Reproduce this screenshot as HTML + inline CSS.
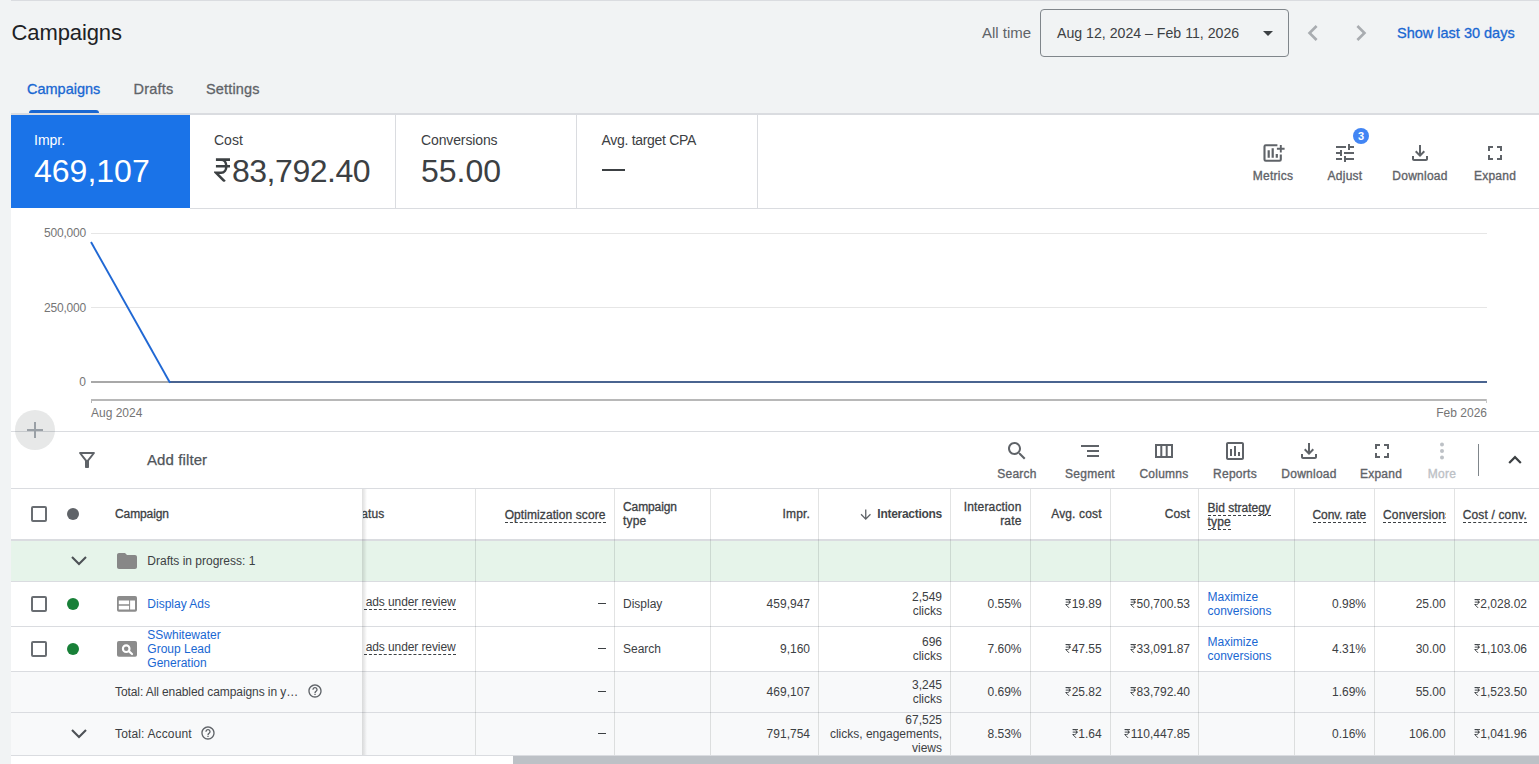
<!DOCTYPE html>
<html><head><meta charset="utf-8">
<style>
*{box-sizing:border-box;margin:0;padding:0}
html,body{width:1539px;height:764px;overflow:hidden;background:#f1f3f4;font-family:"Liberation Sans",sans-serif;color:#3c4043}
.a{position:absolute;white-space:nowrap;line-height:1}
.t{position:absolute;white-space:nowrap;line-height:14px;font-size:12px;color:#3c4043}
.r{text-align:right}
svg{display:block}
.rs{display:inline-block;width:.56em;height:.74em;vertical-align:baseline}
.lbl{position:absolute;font-size:12px;line-height:1;color:#5f6368;white-space:nowrap;text-align:center;-webkit-text-stroke:.35px #5f6368;letter-spacing:.25px}
.vl{position:absolute;width:1px;background:#dadce0}
.hl{position:absolute;height:1px;background:#dadce0}
.du{border-bottom:1px dashed #3c4043}
.blue{color:#1967d2}
</style></head><body>
<svg width="0" height="0" style="position:absolute"><defs>
<symbol id="rs" viewBox="0 0 56 74"><path d="M6 5H50M6 26H50M6 5H22C44 5 44 46 22 46H6L34 74" fill="none" stroke="currentColor" stroke-width="8" stroke-linejoin="miter"/></symbol>
</defs></svg>

<!-- top -->
<div class="hl" style="left:11px;top:0;width:1528px;height:1px;background:#dadce0"></div>
<div class="a" id="title" style="left:11.5px;top:22px;font-size:22px;letter-spacing:-.1px;color:#202124">Campaigns</div>

<!-- main white -->
<div class="a" style="left:11px;top:113px;width:1528px;height:2px;background:#dadce0"></div>
<div class="a" style="left:11px;top:115px;width:1528px;height:649px;background:#fff"></div>

<!-- tabs -->
<div class="a" id="tab1" style="left:27px;top:82px;font-size:14.5px;color:#1967d2;-webkit-text-stroke:.3px #1967d2">Campaigns</div>
<div class="a" id="tab2" style="left:133.5px;top:82px;font-size:14.5px;letter-spacing:.2px;color:#5f6368;-webkit-text-stroke:.3px #5f6368">Drafts</div>
<div class="a" id="tab3" style="left:206px;top:82px;font-size:14.5px;letter-spacing:.15px;color:#5f6368;-webkit-text-stroke:.3px #5f6368">Settings</div>
<div class="a" style="left:29px;top:110px;width:70px;height:3px;background:#1967d2;border-radius:3px 3px 0 0"></div>

<!-- date range -->
<div class="a" id="alltime" style="left:982px;top:25px;font-size:15px;color:#5f6368">All time</div>
<div class="a" style="left:1040px;top:9px;width:249px;height:48px;border:1px solid #80868b;border-radius:4px"></div>
<div class="a" id="daterange" style="left:1057px;top:26px;font-size:14.15px;color:#3c4043">Aug 12, 2024 – Feb 11, 2026</div>
<svg class="a" style="left:1263px;top:31px" width="10" height="5"><path d="M0 0H10L5 5z" fill="#3c4043"/></svg>
<svg class="a" style="left:1301px;top:21px" width="24" height="24" viewBox="0 0 24 24"><path d="M15.41 7.41L14 6l-6 6 6 6 1.41-1.41L10.83 12z" fill="#a9acb0" transform="translate(12 12) scale(1.33) translate(-12 -12)"/></svg>
<svg class="a" style="left:1349px;top:21px" width="24" height="24" viewBox="0 0 24 24"><path d="M10 6L8.59 7.41 13.17 12l-4.58 4.59L10 18l6-6z" fill="#a9acb0" transform="translate(12 12) scale(1.33) translate(-12 -12)"/></svg>
<div class="a" id="show30" style="left:1397px;top:26px;font-size:14.5px;color:#1967d2;-webkit-text-stroke:.3px #1967d2">Show last 30 days</div>

<!-- cards -->
<div class="a" style="left:11px;top:115px;width:179px;height:93px;background:#1a73e8"></div>
<div class="hl" style="left:190px;top:208px;width:1349px"></div>
<div class="vl" style="left:395px;top:115px;height:93px"></div>
<div class="vl" style="left:576px;top:115px;height:93px"></div>
<div class="vl" style="left:757px;top:115px;height:93px"></div>
<div class="a" id="c1l" style="left:34px;top:133px;font-size:14px;color:#fff">Impr.</div>
<div class="a" id="c1v" style="left:34px;top:155px;font-size:32px;color:#fff">469,107</div>
<div class="a" id="c2l" style="left:214px;top:133px;font-size:14px;color:#3c4043">Cost</div>
<div class="a" id="c2v" style="left:214px;top:155px;font-size:32px;letter-spacing:-.45px;color:#3c4043"><svg class="rs"><use href="#rs"/></svg>83,792.40</div>
<div class="a" id="c3l" style="left:421px;top:133px;font-size:14px;letter-spacing:-.12px;color:#3c4043">Conversions</div>
<div class="a" id="c3v" style="left:421px;top:155px;font-size:32px;color:#3c4043">55.00</div>
<div class="a" id="c4l" style="left:601.5px;top:133px;font-size:14px;letter-spacing:-.3px;color:#3c4043">Avg. target CPA</div>
<div class="a" style="left:602px;top:169px;width:23px;height:2px;background:#3c4043"></div>

<!-- card right actions -->
<svg class="a" style="left:1261px;top:141px" width="26" height="24" viewBox="0 0 26 24" fill="none" stroke="#5f6368" stroke-width="2.100"><path d="M16.400 4.300H4.700Q3.500 4.300 3.500 5.500V18.500Q3.500 19.700 4.700 19.700H18.600Q19.800 19.700 19.800 18.500V13.600"/><path d="M15.900 7.800H23.600M19.800 4.100V11.500" stroke-width="1.900"/><path d="M7.700 9.300V16.800M11.700 7.200V16.800M15.800 13.100V16.800" stroke-width="2.200"/></svg>
<div class="lbl" id="l_metrics" style="left:1243px;width:60px;top:170px">Metrics</div>
<svg class="a" style="left:1333px;top:141px" width="24" height="24" viewBox="0 0 24 24" fill="#5f6368"><path d="M3 17v2h6v-2H3zM3 5v2h10V5H3zm10 16v-2h8v-2h-8v-2h-2v6h2zM7 9v2H3v2h4v2h2V9H7zm14 4v-2H11v2h10zm-6-4h2V7h4V5h-4V3h-2v6z"/></svg>
<div class="a" style="left:1353px;top:128px;width:16px;height:16px;border-radius:8px;background:#4285f4;color:#fff;font-size:11px;font-weight:bold;text-align:center;line-height:16px">3</div>
<div class="lbl" id="l_adjust" style="left:1315px;width:60px;top:170px">Adjust</div>
<svg class="a" style="left:1408px;top:141px" width="24" height="24" viewBox="0 0 24 24" fill="#5f6368"><path d="M18 15v3H6v-3H4v3c0 1.1.9 2 2 2h12c1.1 0 2-.9 2-2v-3h-2zm-1-4l-1.41-1.41L13 12.170V4h-2v8.170L8.410 9.590 7 11l5 5 5-5z"/></svg>
<div class="lbl" id="l_dl1" style="left:1385px;width:70px;top:170px">Download</div>
<svg class="a" style="left:1483px;top:141px" width="24" height="24" viewBox="0 0 24 24" fill="#5f6368"><path d="M7 14H5v5h5v-2H7v-3zm-2-4h2V7h3V5H5v5zm12 7h-3v2h5v-5h-2v3zM14 5v2h3v3h2V5h-5z"/></svg>
<div class="lbl" id="l_exp1" style="left:1465px;width:60px;top:170px">Expand</div>

<!-- chart -->
<div class="hl" style="left:91px;top:233px;width:1396px;background:#e6e6e6"></div>
<div class="hl" style="left:91px;top:307px;width:1396px;background:#e6e6e6"></div>
<div class="hl" style="left:91px;top:381px;width:1396px;height:2px;background:#a8a8a8"></div>
<div class="hl" style="left:91px;top:399px;width:1396px;height:2px;background:#b8b8b8"></div>
<div class="vl" style="left:91px;top:399px;height:4px;background:#b8b8b8"></div>
<div class="vl" style="left:1486px;top:399px;height:4px;background:#c8c8c8"></div>
<svg class="a" style="left:0;top:209px" width="1539" height="200"><path d="M169 173H1487" fill="none" stroke="#4a6490" stroke-width="2"/><path d="M91 33L170 173.700" fill="none" stroke="#2068d4" stroke-width="1.900"/></svg>
<div class="a r" id="y1" style="left:20px;width:66px;top:227px;font-size:12px;color:#757575;letter-spacing:-.2px">500,000</div>
<div class="a r" id="y2" style="left:20px;width:66px;top:302px;font-size:12px;color:#757575;letter-spacing:-.2px">250,000</div>
<div class="a r" id="y3" style="left:20px;width:66px;top:376px;font-size:12px;color:#757575">0</div>
<div class="a" id="x1" style="left:91px;top:407px;font-size:12px;color:#757575">Aug 2024</div>
<div class="a r" id="x2" style="left:1387px;width:100px;top:407px;font-size:12px;color:#757575">Feb 2026</div>

<!-- toolbar -->
<div class="hl" style="left:11px;top:431px;width:1528px"></div>
<div class="a" style="left:15px;top:410px;width:40px;height:40px;border-radius:20px;background:rgba(60,64,67,.12)"></div>
<div class="a" style="left:27px;top:429px;width:16px;height:2px;background:#9aa0a6"></div>
<div class="a" style="left:34px;top:422px;width:2px;height:16px;background:#9aa0a6"></div>
<svg class="a" style="left:75px;top:448px" width="24" height="24" viewBox="0 0 24 24" fill="#5f6368"><path d="M7 6h10l-5.010 6.300L7 6zm-2.750-.390C6.270 8.200 10 13 10 13v6c0 .550.450 1 1 1h2c.550 0 1-.450 1-1v-6s3.720-4.800 5.740-7.390c.510-.660.040-1.610-.790-1.610H5.040c-.830 0-1.300.950-.790 1.610z"/></svg>
<div class="a" id="addfilter" style="left:147px;top:452px;font-size:15px;color:#50555a;-webkit-text-stroke:.25px #50555a;letter-spacing:.1px">Add filter</div>

<!-- toolbar right -->
<svg class="a" style="left:1005px;top:439px" width="24" height="24" viewBox="0 0 24 24" fill="#5f6368"><path d="M15.500 14h-.790l-.280-.270C15.410 12.590 16 11.110 16 9.500 16 5.910 13.090 3 9.500 3S3 5.910 3 9.500 5.910 16 9.500 16c1.610 0 3.090-.590 4.230-1.570l.270.280v.790l5 4.990L20.490 19l-4.990-5zm-6 0C7.010 14 5 11.990 5 9.500S7.010 5 9.500 5 14 7.010 14 9.500 11.990 14 9.500 14z"/></svg>
<div class="lbl" id="l_search" style="left:987px;width:60px;top:468px">Search</div>
<svg class="a" style="left:1078px;top:439px" width="24" height="24" viewBox="0 0 24 24" fill="#5f6368"><path d="M9 18h12v-2H9v2zM3 6v2h18V6H3zm6 7h12v-2H9v2z"/></svg>
<div class="lbl" id="l_segment" style="left:1055px;width:70px;top:468px">Segment</div>
<svg class="a" style="left:1152px;top:439px" width="24" height="24" viewBox="0 0 24 24" fill="none" stroke="#5f6368" stroke-width="2"><path d="M4 6H20V18H4zM9.300 6V18M14.700 6V18"/></svg>
<div class="lbl" id="l_columns" style="left:1129px;width:70px;top:468px">Columns</div>
<svg class="a" style="left:1223px;top:439px" width="24" height="24" viewBox="0 0 24 24" fill="#5f6368"><path d="M9 17H7v-7h2v7zm4 0h-2V7h2v10zm4 0h-2v-4h2v4zm2 2H5V5h14v14zm0-16H5c-1.100 0-2 .900-2 2v14c0 1.100.900 2 2 2h14c1.100 0 2-.900 2-2V5c0-1.100-.900-2-2-2z"/></svg>
<div class="lbl" id="l_reports" style="left:1200px;width:70px;top:468px">Reports</div>
<svg class="a" style="left:1297px;top:439px" width="24" height="24" viewBox="0 0 24 24" fill="#5f6368"><path d="M18 15v3H6v-3H4v3c0 1.1.9 2 2 2h12c1.1 0 2-.9 2-2v-3h-2zm-1-4l-1.41-1.41L13 12.170V4h-2v8.170L8.410 9.590 7 11l5 5 5-5z"/></svg>
<div class="lbl" id="l_dl2" style="left:1274px;width:70px;top:468px">Download</div>
<svg class="a" style="left:1370px;top:439px" width="24" height="24" viewBox="0 0 24 24" fill="#5f6368"><path d="M7 14H5v5h5v-2H7v-3zm-2-4h2V7h3V5H5v5zm12 7h-3v2h5v-5h-2v3zM14 5v2h3v3h2V5h-5z"/></svg>
<div class="lbl" id="l_exp2" style="left:1351px;width:60px;top:468px">Expand</div>
<svg class="a" style="left:1430px;top:439px" width="24" height="24" viewBox="0 0 24 24" fill="#bdc1c6"><circle cx="12" cy="5.500" r="2"/><circle cx="12" cy="12" r="2"/><circle cx="12" cy="18.500" r="2"/></svg>
<div class="lbl" id="l_more" style="left:1412px;width:60px;top:468px;color:#bdc1c6;-webkit-text-stroke-color:#bdc1c6">More</div>
<div class="vl" style="left:1478px;top:444px;height:32px;background:#80868b"></div>
<svg class="a" style="left:1503px;top:448px" width="24" height="24" viewBox="0 0 24 24" fill="#3c4043"><path d="M12 8l-6 6 1.410 1.410L12 10.830l4.590 4.580L18 14z" transform="translate(12 12) scale(1.1) translate(-12 -12)"/></svg>

<!-- table -->
<div class="hl" style="left:11px;top:488px;width:1528px"></div>
<div class="a" style="left:11px;top:539px;width:1528px;height:2px;background:#dadce0"></div>
<div class="a" style="left:11px;top:541px;width:1528px;height:40px;background:#e6f4ea"></div>
<div class="a" style="left:11px;top:672px;width:1528px;height:83px;background:#f8f9fa"></div>
<div class="hl" style="left:11px;top:581px;width:1528px"></div>
<div class="hl" style="left:11px;top:626px;width:1528px"></div>
<div class="hl" style="left:11px;top:671px;width:1528px"></div>
<div class="hl" style="left:11px;top:712px;width:1528px"></div>
<div class="hl" style="left:11px;top:755px;width:1528px"></div>
<div class="vl" style="left:475px;top:489px;height:266px;background:rgba(60,64,67,.15)"></div>
<div class="vl" style="left:614px;top:489px;height:266px;background:rgba(60,64,67,.15)"></div>
<div class="vl" style="left:710px;top:489px;height:266px;background:rgba(60,64,67,.15)"></div>
<div class="vl" style="left:818px;top:489px;height:266px;background:rgba(60,64,67,.15)"></div>
<div class="vl" style="left:950px;top:489px;height:266px;background:rgba(60,64,67,.15)"></div>
<div class="vl" style="left:1030px;top:489px;height:266px;background:rgba(60,64,67,.15)"></div>
<div class="vl" style="left:1110px;top:489px;height:266px;background:rgba(60,64,67,.15)"></div>
<div class="vl" style="left:1198px;top:489px;height:266px;background:rgba(60,64,67,.15)"></div>
<div class="vl" style="left:1294px;top:489px;height:266px;background:rgba(60,64,67,.15)"></div>
<div class="vl" style="left:1374px;top:489px;height:266px;background:rgba(60,64,67,.15)"></div>
<div class="vl" style="left:1454px;top:489px;height:266px;background:rgba(60,64,67,.15)"></div>
<div class="a" style="left:362px;top:489px;width:5px;height:266px;background:linear-gradient(90deg,rgba(0,0,0,.13),rgba(0,0,0,.08) 45%,rgba(0,0,0,0))"></div>
<div class="a" style="left:11px;top:756px;width:502px;height:8px;background:#fff"></div>
<div class="a" style="left:513px;top:756px;width:1026px;height:8px;background:#bdc1c6"></div>
<div class="a" style="left:31px;top:506px;width:16px;height:16px;border:2px solid #696d72;border-radius:2px"></div>
<div class="a" style="left:67px;top:508px;width:12px;height:12px;border-radius:6px;background:#5f6368"></div>
<div class="t " id="h_camp" style="left:115px;top:507.0px;font-weight:normal;-webkit-text-stroke:.3px #3c4043;letter-spacing:-0.1px;">Campaign</div>
<div class="a" style="left:363px;top:500px;width:40px;height:28px;overflow:hidden"><div class="t" id="h_status" style="left:-13.500px;top:7px;font-weight:normal;-webkit-text-stroke:.3px #3c4043;letter-spacing:.15px;">Status</div></div>
<div class="t r " id="h_opt" style="right:933.5px;top:507.5px;font-weight:normal;-webkit-text-stroke:.3px #3c4043;letter-spacing:0.08px;"><span class="du">Optimization score</span></div>
<div class="t " id="h_ct1" style="left:623px;top:500.0px;font-weight:normal;-webkit-text-stroke:.3px #3c4043;letter-spacing:-0.1px;">Campaign</div>
<div class="t " id="h_ct2" style="left:623px;top:514.0px;font-weight:normal;-webkit-text-stroke:.3px #3c4043;letter-spacing:.15px;">type</div>
<div class="t r " id="h_impr" style="right:729px;top:507.0px;font-weight:normal;-webkit-text-stroke:.3px #3c4043;letter-spacing:.15px;">Impr.</div>
<div class="t r " id="h_int" style="right:597px;top:507.0px;font-weight:bold;color:#43474a;letter-spacing:-.28px;">Interactions</div>
<svg class="a" style="left:858px;top:507px" width="15.500" height="15.500" viewBox="0 0 24 24" fill="#5f6368"><path d="M20 12l-1.410-1.410L13 16.170V4h-2v12.170l-5.580-5.590L4 12l8 8 8-8z"/></svg>
<div class="t r " id="h_ir1" style="right:517.5px;top:500.0px;font-weight:normal;-webkit-text-stroke:.3px #3c4043;letter-spacing:.15px;">Interaction</div>
<div class="t r " id="h_ir2" style="right:517.5px;top:514.0px;font-weight:normal;-webkit-text-stroke:.3px #3c4043;letter-spacing:.15px;">rate</div>
<div class="t r " id="h_avg" style="right:437.29999999999995px;top:507.0px;font-weight:normal;-webkit-text-stroke:.3px #3c4043;letter-spacing:.15px;">Avg. cost</div>
<div class="t r " id="h_cost" style="right:349px;top:507.0px;font-weight:normal;-webkit-text-stroke:.3px #3c4043;letter-spacing:.15px;">Cost</div>
<div class="t " id="h_bid1" style="left:1207.5px;top:501.0px;font-weight:normal;-webkit-text-stroke:.3px #3c4043;letter-spacing:0px;"><span class="du">Bid strategy</span></div>
<div class="t " id="h_bid2" style="left:1207.5px;top:515.0px;font-weight:normal;-webkit-text-stroke:.3px #3c4043;letter-spacing:.15px;"><span class="du">type</span></div>
<div class="t r " id="h_cr" style="right:173px;top:507.5px;font-weight:normal;-webkit-text-stroke:.3px #3c4043;letter-spacing:-0.1px;"><span class="du">Conv. rate</span></div>
<div class="a" style="left:1383px;top:500px;width:63px;height:28px;overflow:hidden"><div class="t" id="h_conv" style="left:0;top:7.500px;font-weight:normal;-webkit-text-stroke:.3px #3c4043;letter-spacing:.15px;"><span class="du">Conversions</span></div></div>
<div class="t r " id="h_cc" style="right:12px;top:507.5px;font-weight:normal;-webkit-text-stroke:.3px #3c4043;letter-spacing:.15px;"><span class="du">Cost / conv.</span></div>
<svg class="a" style="left:70px;top:554px" width="18" height="12" viewBox="0 0 18 12"><path d="M2 3L9 10L16 3" fill="none" stroke="#4d5156" stroke-width="2.100"/></svg>
<svg class="a" style="left:115px;top:549px" width="24" height="24" viewBox="0 0 24 24" fill="#878787"><path d="M10 4H4c-1.100 0-1.990.900-1.990 2L2 18c0 1.100.900 2 2 2h16c1.100 0 2-.900 2-2V8c0-1.100-.900-2-2-2h-8l-2-2z"/></svg>
<div class="t " id="d_txt" style="left:147.3px;top:554.0px;">Drafts in progress: 1</div>
<div class="a" style="left:31px;top:596px;width:16px;height:16px;border:2px solid #696d72;border-radius:2px"></div>
<div class="a" style="left:67px;top:598px;width:12px;height:12px;border-radius:6px;background:#188038"></div>
<svg class="a" style="left:117px;top:596px" width="20" height="16" viewBox="0 0 20 16"><rect x="0" y="0" width="20" height="15.800" rx="1.800" fill="#8c8c8c"/><path d="M1.800 4.500H12.100V8.200H1.800zM1.800 9.700H12.100V13.600H1.800zM13.100 4.500H18V13.600H13.100z" fill="#fff"/></svg>
<div class="t blue" id="r1_name" style="left:147.3px;top:597.0px;">Display Ads</div>
<div class="t" id="r1_st" style="right:1083.4px;top:594.5px;letter-spacing:-.09px"><span class="du" style="padding-left:2px">ads under review</span></div>
<div class="a" id="r1_opt" style="left:597.5px;top:603px;width:8px;height:1px;background:#3c4043"></div>
<div class="t " id="r1_ct" style="left:623px;top:597.0px;">Display</div>
<div class="t r " id="r1_impr" style="right:729px;top:596.5px;">459,947</div>
<div class="t r " id="r1_int1" style="right:597px;top:590.0px;">2,549</div>
<div class="t r " id="r1_int2" style="right:597px;top:604.0px;">clicks</div>
<div class="t r " id="r1_ir" style="right:517.5px;top:596.5px;">0.55%</div>
<div class="t r " id="r1_avg" style="right:437.29999999999995px;top:596.5px;"><svg class="rs"><use href="#rs"/></svg>19.89</div>
<div class="t r " id="r1_cost" style="right:349px;top:596.5px;"><svg class="rs"><use href="#rs"/></svg>50,700.53</div>
<div class="t blue" id="r1_bid1" style="left:1207.5px;top:590.0px;">Maximize</div>
<div class="t blue" id="r1_bid2" style="left:1207.5px;top:604.0px;">conversions</div>
<div class="t r " id="r1_cr" style="right:173px;top:596.5px;">0.98%</div>
<div class="t r " id="r1_conv" style="right:93.29999999999995px;top:596.5px;">25.00</div>
<div class="t r " id="r1_cc" style="right:12px;top:596.5px;"><svg class="rs"><use href="#rs"/></svg>2,028.02</div>
<div class="a" style="left:31px;top:641px;width:16px;height:16px;border:2px solid #696d72;border-radius:2px"></div>
<div class="a" style="left:67px;top:643px;width:12px;height:12px;border-radius:6px;background:#188038"></div>
<svg class="a" style="left:117px;top:641px" width="20" height="16" viewBox="0 0 20 16"><rect x="0" y="0" width="20" height="15.800" rx="1.800" fill="#8c8c8c"/><circle cx="9.200" cy="7.700" r="3.300" fill="none" stroke="#fff" stroke-width="2.100"/><path d="M11.800 10.200L15 13" stroke="#fff" stroke-width="2.200" stroke-linecap="round"/></svg>
<div class="t blue" id="r2_n1" style="left:147.3px;top:627.5px;">SSwhitewater</div>
<div class="t blue" id="r2_n2" style="left:147.3px;top:641.5px;">Group Lead</div>
<div class="t blue" id="r2_n3" style="left:147.3px;top:655.5px;">Generation</div>
<div class="t" id="r2_st" style="right:1083.4px;top:639.5px;letter-spacing:-.09px"><span class="du" style="padding-left:2px">ads under review</span></div>
<div class="a" id="r2_opt" style="left:597.5px;top:648px;width:8px;height:1px;background:#3c4043"></div>
<div class="t " id="r2_ct" style="left:623px;top:642.0px;">Search</div>
<div class="t r " id="r2_impr" style="right:729px;top:641.5px;">9,160</div>
<div class="t r " id="r2_int1" style="right:597px;top:635.0px;">696</div>
<div class="t r " id="r2_int2" style="right:597px;top:649.0px;">clicks</div>
<div class="t r " id="r2_ir" style="right:517.5px;top:641.5px;">7.60%</div>
<div class="t r " id="r2_avg" style="right:437.29999999999995px;top:641.5px;"><svg class="rs"><use href="#rs"/></svg>47.55</div>
<div class="t r " id="r2_cost" style="right:349px;top:641.5px;"><svg class="rs"><use href="#rs"/></svg>33,091.87</div>
<div class="t blue" id="r2_bid1" style="left:1207.5px;top:635.0px;">Maximize</div>
<div class="t blue" id="r2_bid2" style="left:1207.5px;top:649.0px;">conversions</div>
<div class="t r " id="r2_cr" style="right:173px;top:641.5px;">4.31%</div>
<div class="t r " id="r2_conv" style="right:93.29999999999995px;top:641.5px;">30.00</div>
<div class="t r " id="r2_cc" style="right:12px;top:641.5px;"><svg class="rs"><use href="#rs"/></svg>1,103.06</div>
<div class="t " id="t1_name" style="left:115px;top:684.5px;letter-spacing:-0.09px;">Total: All enabled campaigns in y…</div>
<svg class="a" style="left:307px;top:683px" width="16" height="16" viewBox="0 0 24 24" fill="#5f6368"><path d="M11 18h2v-2h-2v2zm1-16C6.480 2 2 6.480 2 12s4.480 10 10 10 10-4.480 10-10S17.520 2 12 2zm0 18c-4.410 0-8-3.590-8-8s3.590-8 8-8 8 3.590 8 8-3.590 8-8 8zm0-14c-2.210 0-4 1.790-4 4h2c0-1.100.900-2 2-2s2 .900 2 2c0 2-3 1.750-3 5h2c0-2.250 3-2.500 3-5 0-2.210-1.790-4-4-4z"/></svg>
<div class="a" id="t1_opt" style="left:597.5px;top:691px;width:8px;height:1px;background:#3c4043"></div>
<div class="t r " id="t1_impr" style="right:729px;top:685.0px;">469,107</div>
<div class="t r " id="t1_int1" style="right:597px;top:677.5px;">3,245</div>
<div class="t r " id="t1_int2" style="right:597px;top:691.5px;">clicks</div>
<div class="t r " id="t1_ir" style="right:517.5px;top:685.0px;">0.69%</div>
<div class="t r " id="t1_avg" style="right:437.29999999999995px;top:685.0px;"><svg class="rs"><use href="#rs"/></svg>25.82</div>
<div class="t r " id="t1_cost" style="right:349px;top:685.0px;"><svg class="rs"><use href="#rs"/></svg>83,792.40</div>
<div class="t r " id="t1_cr" style="right:173px;top:685.0px;">1.69%</div>
<div class="t r " id="t1_conv" style="right:93.29999999999995px;top:685.0px;">55.00</div>
<div class="t r " id="t1_cc" style="right:12px;top:685.0px;"><svg class="rs"><use href="#rs"/></svg>1,523.50</div>
<svg class="a" style="left:70px;top:726.500px" width="18" height="12" viewBox="0 0 18 12"><path d="M2 3L9 10L16 3" fill="none" stroke="#4d5156" stroke-width="2.100"/></svg>
<div class="t " id="t2_name" style="left:115px;top:727.0px;letter-spacing:.15px;">Total: Account</div>
<svg class="a" style="left:200px;top:725px" width="16" height="16" viewBox="0 0 24 24" fill="#5f6368"><path d="M11 18h2v-2h-2v2zm1-16C6.480 2 2 6.480 2 12s4.480 10 10 10 10-4.480 10-10S17.520 2 12 2zm0 18c-4.410 0-8-3.590-8-8s3.590-8 8-8 8 3.590 8 8-3.590 8-8 8zm0-14c-2.210 0-4 1.790-4 4h2c0-1.100.900-2 2-2s2 .900 2 2c0 2-3 1.750-3 5h2c0-2.250 3-2.500 3-5 0-2.210-1.790-4-4-4z"/></svg>
<div class="a" id="t2_opt" style="left:597.5px;top:733px;width:8px;height:1px;background:#3c4043"></div>
<div class="t r " id="t2_impr" style="right:729px;top:727.0px;">791,754</div>
<div class="t r " id="t2_int1" style="right:597px;top:713.0px;">67,525</div>
<div class="t r " id="t2_int2" style="right:597px;top:727.0px;">clicks, engagements,</div>
<div class="t r " id="t2_int3" style="right:597px;top:741.0px;">views</div>
<div class="t r " id="t2_ir" style="right:517.5px;top:727.0px;">8.53%</div>
<div class="t r " id="t2_avg" style="right:437.29999999999995px;top:727.0px;"><svg class="rs"><use href="#rs"/></svg>1.64</div>
<div class="t r " id="t2_cost" style="right:349px;top:727.0px;"><svg class="rs"><use href="#rs"/></svg>110,447.85</div>
<div class="t r " id="t2_cr" style="right:173px;top:727.0px;">0.16%</div>
<div class="t r " id="t2_conv" style="right:93.29999999999995px;top:727.0px;">106.00</div>
<div class="t r " id="t2_cc" style="right:12px;top:727.0px;"><svg class="rs"><use href="#rs"/></svg>1,041.96</div>
</body></html>
